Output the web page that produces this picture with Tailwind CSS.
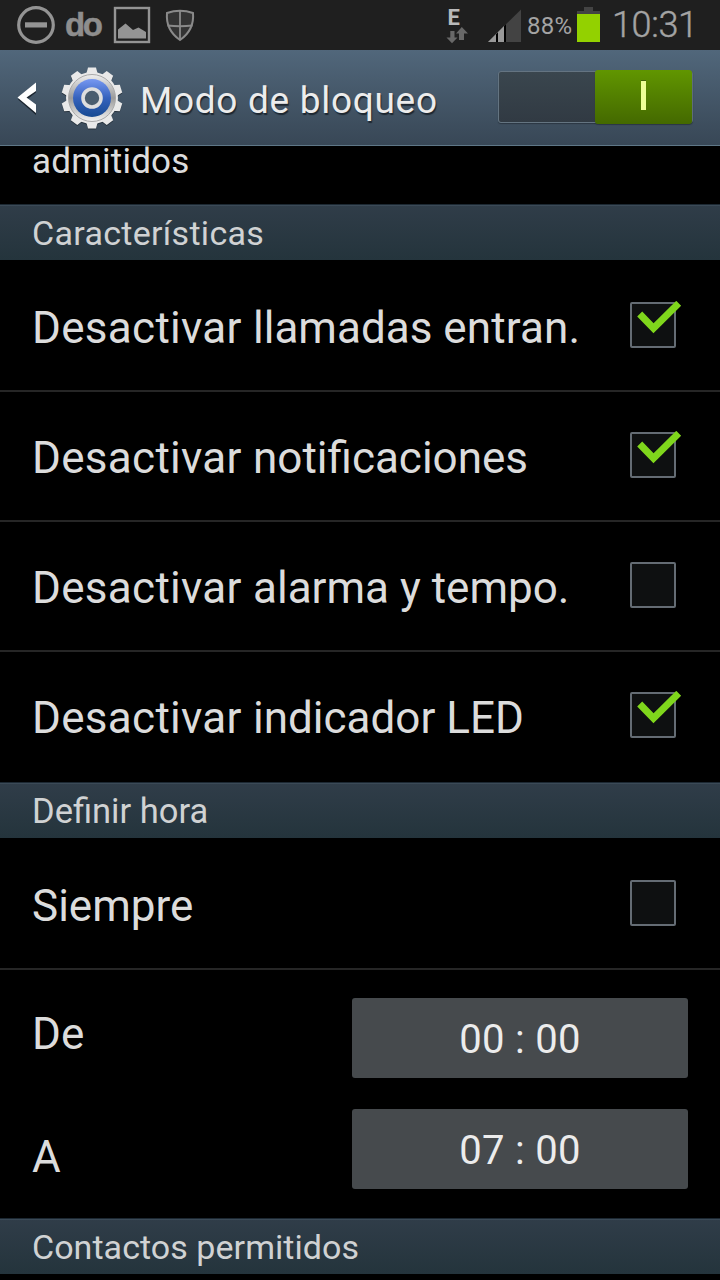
<!DOCTYPE html>
<html lang="es">
<head>
<meta charset="utf-8">
<title>Modo de bloqueo</title>
<script src="https://cdn.jsdelivr.net/npm/@tailwindcss/browser@4"></script>
</head>
<body class="bg-black">
<svg class="hidden">
  <symbol id="check" viewBox="0 0 52 48"><path d="M9.700 13 23.500 27.200 48.700 2.300" fill="none" stroke="#7fd61c" stroke-width="7"/></symbol>
</svg>
<div class="w-[720px] h-[1280px] bg-black overflow-hidden flex flex-col font-['Roboto',sans-serif] text-[#dcdcdc] whitespace-nowrap">
  <header class="h-[50px] shrink-0 bg-[#1f1f1f] flex text-[#9a9a9a]">
    <svg class="w-[200px] h-[50px]" viewBox="0 0 200 50">
      <circle cx="36" cy="25" r="17.300" fill="none" stroke="#949494" stroke-width="3.200"/>
      <rect x="25" y="22.300" width="22" height="5.200" fill="#949494"/>
      <text x="65" y="36.300" font-family="Liberation Sans" font-weight="700" font-size="33" textLength="38" lengthAdjust="spacing" fill="#8e8e8e" stroke="#8e8e8e" stroke-width=".5">do</text>
      <rect x="115" y="8" width="34" height="34" fill="none" stroke="#949494" stroke-width="2.400"/>
      <path d="M118 38.500V29.500L125.500 23.500 133 30 138.500 27.500 146 32V38.500Z" fill="#949494"/>
      <path d="M167 13Q180 8.500 193 13Q194.500 30 180 40Q165.500 30 167 13Z" fill="#333" stroke="#8a8a8a" stroke-width="2"/>
      <path d="M180 11V39M167.500 25.500Q180 27 192.500 25.500" fill="none" stroke="#8a8a8a" stroke-width="1.800"/>
    </svg>
    <svg class="w-[520px] h-[50px]" viewBox="200 0 520 50">
      <text x="447.500" y="25" font-family="Roboto" font-weight="700" font-size="22" fill="#bababa">E</text>
      <path d="M450.300 31H454.500V37.500H457.500L452 43.300 446.500 37.500H450.300Z" fill="#686868"/>
      <path d="M461.800 27 468 33.500H464V40H459V33.500H456Z" fill="#686868"/>
      <path d="M488 42 521 9.500V42Z" fill="#434343"/>
      <path d="M488 42 504.500 25.500V42Z" fill="#999"/>
      <path d="M496 34.200 498 32.200V42H496ZM504 26.300 506 24.300V42H504Z" fill="#000"/>
      <text x="527" y="34" font-family="Roboto" font-size="24" textLength="45" fill="#a4a4a4">88%</text>
      <path d="M577 14V11H584V7H593V11H600V14Z" fill="#434343"/>
      <rect x="577" y="14" width="23" height="28" fill="#93d100"/>
      <text x="612" y="37" font-family="Roboto" font-weight="300" font-size="36" textLength="86" fill="#a4a4a4" stroke="#a4a4a4" stroke-width=".4">10:31</text>
    </svg>
  </header>

  <section class="h-[96px] shrink-0 flex items-center bg-linear-to-b from-[#51677b] to-[#384756] border-b border-[#5f7787]">
    <svg class="w-[140px] h-[95px] shrink-0" viewBox="0 50 140 95">
      <path d="M36 84.500V92.500L27 99.500 36 107V115L18 99.500Z" fill="#1c2630"/>
      <path d="M36 82.500V91L26.500 97.500 36 104.500V113L17.500 97.500Z" fill="#fff"/>
      <defs>
        <linearGradient id="ring" x1="0" y1="0" x2="0" y2="1"><stop offset="0" stop-color="#f0f0f0"/><stop offset=".5" stop-color="#9b9b9b"/><stop offset="1" stop-color="#f3f3f3"/></linearGradient>
        <linearGradient id="blue" x1="0" y1="0" x2="0" y2="1"><stop offset="0" stop-color="#7798f2"/><stop offset=".5" stop-color="#3562bd"/><stop offset="1" stop-color="#174a92"/></linearGradient>
        <g id="gear">
          <circle r="26"/>
          <path id="tooth" d="M-6-23-4-30.500H4L6-23V23L4 30.500H-4L-6 23Z"/>
          <use href="#tooth" transform="rotate(36)"/><use href="#tooth" transform="rotate(72)"/><use href="#tooth" transform="rotate(108)"/><use href="#tooth" transform="rotate(144)"/>
        </g>
      </defs>
      <use href="#gear" fill="#26323d" transform="translate(92 99)"/>
      <use href="#gear" fill="#e9e9e9" transform="translate(92 98)"/>
      <circle cx="92" cy="98" r="23.500" fill="url(#ring)" stroke="#a9a9a9" stroke-width="1"/>
      <circle cx="92" cy="98" r="19" fill="url(#blue)"/>
      <circle cx="92" cy="98" r="9" fill="#4a5d6e" stroke="#dedede" stroke-width="3.600"/>
    </svg>
    <h1 class="grow pt-[5px] text-[37px] leading-none tracking-[0.7px] text-[#ececec] [text-shadow:1px_2px_1px_#1d2731]">Modo de bloqueo</h1>
    <div class="w-[195px] h-[54px] mr-[27px] mb-[2px] flex items-center relative">
      <div class="w-full h-[52px] rounded-[3px] border border-[#647481] bg-linear-to-b from-[#3a464e] to-[#313a43] shadow-[0_1px_1px_#2b3743]"></div>
      <div class="absolute right-px top-0 w-[97px] h-[54px] rounded-[3px] bg-linear-to-b from-[#619600] to-[#446900] flex justify-center pt-[10px] shadow-[0_1px_1px_#2b3743]">
        <div class="w-[5px] h-[30px] bg-[#edff97] border-t border-[#42650a]"></div>
      </div>
    </div>
  </section>

  <div class="h-[58px] shrink-0 pl-8"><p class="text-[35px] leading-[32px] tracking-[0.2px]">admitidos</p></div>

  <h2 class="h-[56px] shrink-0 flex items-center pl-8 pt-[2px] text-[34px] leading-none tracking-[0.3px] text-[#d0d2d3] bg-linear-to-b from-[#303d49] to-[#24343c] shadow-[inset_0_1px_#1c2832,inset_0_2px_#3b4a57]">Características</h2>

  <div class="h-[130px] shrink-0 flex items-center justify-between pl-8 pr-[44px]">
    <span class="pt-[6px] text-[44px] leading-none"><span class="tracking-[0.3px]">Desactivar </span>llamadas <span class="tracking-[0.15px]">entran.</span></span>
    <span class="size-[46px] rounded-[2px] border-2 border-[#646c74] bg-[#0e1011] relative"><svg class="absolute -left-[2px] -top-[3px] w-[52px] h-[48px]"><use href="#check"/></svg></span>
  </div>
  <div class="h-[130px] shrink-0 flex items-center justify-between pl-8 pr-[44px] border-t-2 border-[#262626] pb-[2px]">
    <span class="pt-[6px] text-[44px] leading-none"><span class="tracking-[0.3px]">Desactivar </span>notificaciones</span>
    <span class="size-[46px] rounded-[2px] border-2 border-[#646c74] bg-[#0e1011] relative"><svg class="absolute -left-[2px] -top-[3px] w-[52px] h-[48px]"><use href="#check"/></svg></span>
  </div>
  <div class="h-[130px] shrink-0 flex items-center justify-between pl-8 pr-[44px] border-t-2 border-[#262626] pb-[2px]">
    <span class="pt-[6px] text-[44px] leading-none"><span class="tracking-[0.3px]">Desactivar </span>alarma y tempo.</span>
    <span class="size-[46px] rounded-[2px] border-2 border-[#646c74] bg-[#0e1011]"></span>
  </div>
  <div class="h-[132px] shrink-0 flex items-center justify-between pl-8 pr-[44px] border-t-2 border-[#262626] pb-[4px]">
    <span class="pt-[6px] text-[44px] leading-none"><span class="tracking-[0.3px]">Desactivar </span>indicador LED</span>
    <span class="size-[46px] rounded-[2px] border-2 border-[#646c74] bg-[#0e1011] relative"><svg class="absolute -left-[2px] -top-[3px] w-[52px] h-[48px]"><use href="#check"/></svg></span>
  </div>

  <h2 class="h-[56px] shrink-0 flex items-center pl-8 pt-[2px] text-[34.5px] leading-none text-[#d0d2d3] bg-linear-to-b from-[#303d49] to-[#24343c] shadow-[inset_0_1px_#1c2832,inset_0_2px_#3b4a57]">Definir hora</h2>

  <div class="h-[130px] shrink-0 flex items-center justify-between pl-8 pr-[44px]">
    <span class="pt-[6px] text-[44px] leading-none">Siempre</span>
    <span class="size-[46px] rounded-[2px] border-2 border-[#646c74] bg-[#0e1011]"></span>
  </div>
  <div class="h-[250px] shrink-0 flex justify-between pl-8 pr-8 border-t-2 border-[#262626]">
    <div class="pt-[42px] flex flex-col gap-[79px] text-[44px] leading-[44px]"><span>De</span><span>A</span></div>
    <div class="pt-[28px] flex flex-col gap-[31px] text-[40px] tracking-[0.3px] text-[#ececec]">
      <div class="w-[336px] h-[80px] rounded-[3px] bg-[#464a4d] flex items-center justify-center pt-[3px]">00 : 00</div>
      <div class="w-[336px] h-[80px] rounded-[3px] bg-[#464a4d] flex items-center justify-center pt-[3px]">07 : 00</div>
    </div>
  </div>

  <h2 class="h-[56px] shrink-0 flex items-center pl-8 pt-[2px] text-[34px] leading-none tracking-[0.05px] text-[#d0d2d3] bg-linear-to-b from-[#303d49] to-[#24343c] shadow-[inset_0_1px_#1c2832,inset_0_2px_#3b4a57]">Contactos permitidos</h2>
</div>
</body>
</html>
